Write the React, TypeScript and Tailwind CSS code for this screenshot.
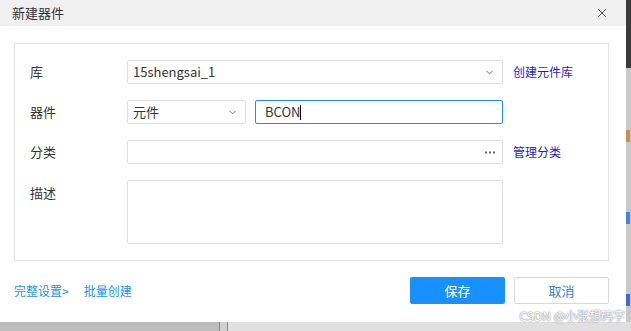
import React from 'react';
import { ChevronDown, X } from 'lucide-react';

const font = { fontFamily: '"Noto Sans CJK SC", "Noto Sans", sans-serif' };

const Row: React.FC<{ label: string; top?: boolean; children: React.ReactNode }> = ({ label, top, children }) => (
  <div className={`flex ${top ? 'items-start' : 'items-center'}`}>
    <div className={`w-[97px] shrink-0 text-[13px] text-[#333] ${top ? 'pt-[3px]' : ''}`}>{label}</div>
    {children}
  </div>
);

const App: React.FC = () => {
  return (
    <div className="w-[631px] h-[331px] overflow-hidden flex flex-col bg-[#c4c4c4] relative" style={font}>
      <div className="flex h-[322px]">
        {/* dialog */}
        <div className="w-[626px] h-full bg-white flex flex-col shadow-[0_2px_6px_rgba(0,0,0,0.25)]">
          <div className="h-[26px] bg-[#f0f0f0] flex items-center justify-between pl-[12px] pr-[17px]">
            <span className="text-[13px] text-[#333]">新建器件</span>
            <X size={14} strokeWidth={1.5} className="text-[#333]" />
          </div>

          <div className="mt-[17px] ml-[14px] w-[595px] h-[218px] border border-[#e4e4e4] pl-[15px] pt-[16px] flex flex-col gap-[16px]">
            <Row label="库">
              <div className="w-[376px] h-[24px] border border-[#dcdfe6] rounded-[2px] flex items-center justify-between pl-[5px] pr-[7px]">
                <span className="text-[13px] text-[#333]">15shengsai_1</span>
                <ChevronDown size={11} strokeWidth={2} className="text-[#666]" />
              </div>
              <span className="ml-[10px] text-[12px] text-[#1a1ae6]">创建元件库</span>
            </Row>
            <Row label="器件">
              <div className="w-[119px] h-[24px] border border-[#dcdfe6] rounded-[2px] flex items-center justify-between pl-[5px] pr-[7px]">
                <span className="text-[13px] text-[#333]">元件</span>
                <ChevronDown size={11} strokeWidth={2} className="text-[#666]" />
              </div>
              <div className="ml-[9px] w-[248px] h-[24px] border border-[#1890ff] rounded-[2px] flex items-center pl-[9px]">
                <span className="text-[13px] text-[#333]">BCON</span>
                <span className="w-px h-[15px] bg-black" />
              </div>
            </Row>
            <Row label="分类">
              <div className="w-[376px] h-[24px] border border-[#dcdfe6] rounded-[2px] flex items-center justify-end pr-[7px]">
                <svg width="10" height="3" viewBox="0 0 10 3" className="text-[#666]">
                  <rect x="0" y="0.5" width="2" height="2" fill="currentColor" />
                  <rect x="4" y="0.5" width="2" height="2" fill="currentColor" />
                  <rect x="8" y="0.5" width="2" height="2" fill="currentColor" />
                </svg>
              </div>
              <span className="ml-[10px] text-[12px] text-[#1a1ae6]">管理分类</span>
            </Row>
            <Row label="描述" top>
              <div className="w-[376px] h-[64px] border border-[#dcdfe6] rounded-[2px]" />
            </Row>
          </div>

          <div className="mt-[16px] pl-[14px] pr-[17px] flex items-center justify-between">
            <div className="flex items-center gap-[15px] text-[12px] text-[#1890ff]">
              <span>完整设置&gt;</span>
              <span>批量创建</span>
            </div>
            <div className="flex gap-[9px]">
              <button className="w-[95px] h-[27px] bg-[#1890ff] rounded-[2px] text-white text-[13px]">保存</button>
              <button className="w-[95px] h-[27px] border border-[#d9d9d9] rounded-[2px] text-[#2f7fe8] text-[13px]">取消</button>
            </div>
          </div>
        </div>

        {/* background strip on the right */}
        <div className="flex-1 flex flex-col">
          <div className="h-[68px] bg-[#3a3a3a]" />
          <div className="flex-1 bg-[#c9c9c9] flex flex-col pt-[62px] gap-[70px]">
            <div className="h-[12px] w-[4px] bg-[#d08a4a]" />
            <div className="h-[12px] w-[4px] bg-[#3b8ad8]" />
            <div className="h-[12px] w-[4px] bg-[#3b6ad8]" />
          </div>
        </div>
      </div>

      {/* background below */}
      <div className="flex-1 flex">
        <div className="w-[219px] bg-[#bdbdbd]" />
        <div className="w-px bg-[#8a8a8a]" />
        <div className="w-[7px] bg-[#d0d0d0]" />
        <div className="w-px bg-[#8a8a8a]" />
        <div className="flex-1 bg-[#e0e0e0]" />
      </div>

      <span className="absolute right-[6px] bottom-[9px] text-[12px] leading-none text-white [text-shadow:0_0_1px_#777,0_0_2px_#999]">
        CSDN @小张想码字
      </span>
    </div>
  );
};

export default App;
